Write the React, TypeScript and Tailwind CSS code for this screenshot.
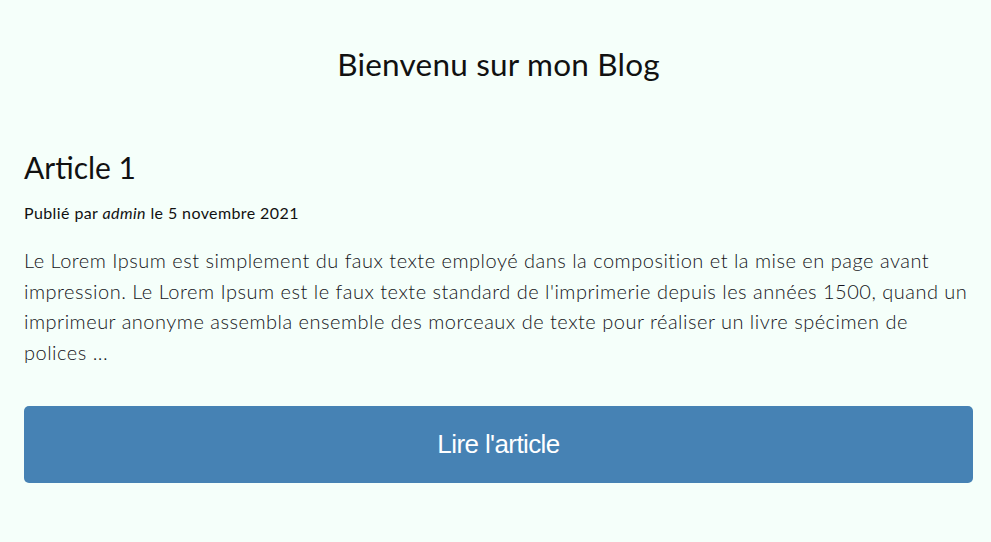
import React from 'react';

const article = {
  title: 'Article 1',
  author: 'admin',
  date: '5 novembre 2021',
  excerpt:
    "Le Lorem Ipsum est simplement du faux texte employé dans la composition et la mise en page avant impression. Le Lorem Ipsum est le faux texte standard de l'imprimerie depuis les années 1500, quand un imprimeur anonyme assembla ensemble des morceaux de texte pour réaliser un livre spécimen de polices ...",
};

export default function App() {
  return (
    <div className="min-h-screen bg-[#f5fffa] pl-6 pr-[18px] text-[#111] font-['Lato','Open_Sans',sans-serif]">
      <h1 className="pt-[44px] text-center text-[31.5px] leading-[40px] font-normal tracking-[0.2px]">
        Bienvenu sur mon Blog
      </h1>

      <article className="mt-[63px]">
        <h2 className="text-[30px] leading-[40px] font-normal">{article.title}</h2>
        <p className="mt-[16px] text-[16px] leading-[20px] tracking-[0.4px]">
          Publié par <em>{article.author}</em> le {article.date}
        </p>
        <p className="mt-[22px] text-[20px] leading-[30.5px] font-light text-[#141420] tracking-[0.5px]">
          {article.excerpt}
        </p>
        <button className="mt-[39px] h-[77px] w-full rounded-[5px] bg-[#4682b4] text-[26px] text-white font-['Liberation_Sans',sans-serif] tracking-[-0.6px]">
          Lire l'article
        </button>
      </article>
    </div>
  );
}
